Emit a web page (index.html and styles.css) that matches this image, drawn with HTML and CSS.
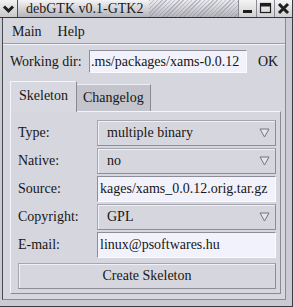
FILE: index.html
```html
<!DOCTYPE html>
<html>
<head>
<meta charset="utf-8">
<title>debGTK</title>
<link rel="stylesheet" href="styles.css">
</head>
<body>
<div class="window">
  <div class="titlebar">
    <div class="tb-icon">
      <svg width="17" height="17" viewBox="0 0 17 17"><path d="M4 6.5 L8.5 11 L13 6.5" fill="none" stroke="#1e1e1e" stroke-width="3"/></svg>
    </div>
    <div class="tb-title">debGTK v0.1-GTK2</div>
    <div class="tb-hatch"></div>
    <div class="tb-btn">
      <svg width="17" height="17" viewBox="0 0 17 17"><rect x="4" y="10" width="9" height="3" fill="#1e1e1e"/></svg>
    </div>
    <div class="tb-btn">
      <svg width="17" height="17" viewBox="0 0 17 17"><rect x="3.5" y="3.5" width="10" height="9" fill="none" stroke="#1e1e1e" stroke-width="1.2"/><rect x="3.5" y="3.5" width="10" height="3" fill="#1e1e1e"/></svg>
    </div>
    <div class="tb-btn">
      <svg width="17" height="17" viewBox="0 0 17 17"><path d="M4 4 L13 13 M13 4 L4 13" stroke="#1e1e1e" stroke-width="3"/></svg>
    </div>
  </div>
  <div class="frame">
    <div class="menubar">
      <span class="menu-item">Main</span>
      <span class="menu-item">Help</span>
    </div>
    <div class="workrow">
      <span class="work-label">Working dir:</span>
      <div class="entry work-entry"><span>.ms/packages/xams-0.0.12</span></div>
      <span class="ok">OK</span>
    </div>
    <div class="notebook">
      <div class="tabs">
        <div class="tab active">Skeleton</div>
        <div class="tab">Changelog</div>
      </div>
      <div class="panel">
        <div class="form">
          <span class="label">Type:</span>
          <div class="combo"><span>multiple binary</span><svg class="arrow" width="11" height="10" viewBox="0 0 11 10"><path d="M1 1 H10 L5.5 9 Z" fill="#e4e4ec" stroke="#74747c" stroke-width="1"/></svg></div>
          <span class="label">Native:</span>
          <div class="combo"><span>no</span><svg class="arrow" width="11" height="10" viewBox="0 0 11 10"><path d="M1 1 H10 L5.5 9 Z" fill="#e4e4ec" stroke="#74747c" stroke-width="1"/></svg></div>
          <span class="label">Source:</span>
          <div class="entry"><span>kages/xams_0.0.12.orig.tar.gz</span></div>
          <span class="label">Copyright:</span>
          <div class="combo"><span>GPL</span><svg class="arrow" width="11" height="10" viewBox="0 0 11 10"><path d="M1 1 H10 L5.5 9 Z" fill="#e4e4ec" stroke="#74747c" stroke-width="1"/></svg></div>
          <span class="label">E-mail:</span>
          <div class="entry"><span>linux@psoftwares.hu</span></div>
        </div>
        <div class="button">Create Skeleton</div>
      </div>
    </div>
  </div>
</div>
</body>
</html>
```
FILE: styles.css
```css
* { box-sizing: border-box; }
html, body { margin: 0; padding: 0; }
body {
  width: 293px;
  height: 307px;
  overflow: hidden;
  font-family: "Liberation Serif", "DejaVu Serif", serif;
  font-size: 14px;
  color: #161616;
  background: #c8c8d0;
}
.window {
  width: 293px;
  height: 307px;
  display: flex;
  flex-direction: column;
  background: #cacad2;
  border-right: 1px solid #3c3c44;
  border-bottom: 1px solid #3c3c44;
}
.titlebar {
  height: 18px;
  display: flex;
  border-bottom: 1px solid #34343c;
  background: linear-gradient(#f4f4f4, #b4b4bc);
}
.tb-icon {
  width: 18px;
  height: 17px;
  display: flex;
  align-items: center;
  justify-content: center;
  background: linear-gradient(#f2f2f2, #c8c8c8);
  border-right: 1px solid #505058;
}
.tb-title {
  padding-left: 8px;
  padding-right: 6px;
  font-size: 14px;
  line-height: 17px;
  color: #1a1a1a;
}
.tb-hatch {
  flex: 1;
  height: 17px;
  background:
    repeating-linear-gradient(135deg, rgba(150,150,160,0.55) 0 1px, rgba(0,0,0,0) 1px 3px),
    linear-gradient(#ececf0, #b4b4bc);
}
.tb-btn {
  width: 18px;
  height: 17px;
  display: flex;
  align-items: center;
  justify-content: center;
  background: linear-gradient(#f4f4f4, #d0d0d4);
  border-left: 1px solid #8a8a92;
}
.frame {
  flex: 1;
  margin: 0 6px 6px 2px;
  border-left: 1px solid #48484f;
  border-right: 1px solid #8a8a92;
  border-bottom: 1px solid #8a8a92;
  background: #d6d6de;
  display: flex;
  flex-direction: column;
}
.menubar {
  height: 26px;
  display: flex;
  align-items: center;
  gap: 16px;
  padding-left: 9px;
  padding-top: 3px;
  border-bottom: 1px solid #9c9ca4;
  box-shadow: 0 1px 0 #f4f4fc;
}
.workrow {
  margin-top: 6px;
  height: 23px;
  display: flex;
  align-items: center;
  padding-left: 7px;
}
.work-label { width: 79px; }
.entry {
  height: 100%;
  display: flex;
  align-items: center;
  overflow: hidden;
  white-space: nowrap;
  background: #f2f2fc;
  border-top: 1px solid #8e8e98;
  border-left: 1px solid #8e8e98;
  border-bottom: 1px solid #fafaff;
  border-right: 1px solid #fafaff;
  padding: 0 2px 0 2px;
}
.work-entry { width: 158px; padding-left: 1px; }
.ok { margin-left: 11px; }
.notebook {
  margin: 8px 4px 0 7px;
  display: flex;
  flex-direction: column;
}
.tabs {
  display: flex;
  align-items: flex-end;
  height: 31px;
  margin-bottom: -1px;
  position: relative;
  z-index: 1;
}
.tab {
  height: 27px;
  padding: 0 6px;
  display: flex;
  align-items: center;
  background: #c4c4cc;
  border-top: 1px solid #eeeef6;
  border-right: 1px solid #8a8a92;
  margin-bottom: 1px;
}
.tab.active {
  height: 31px;
  width: 67px;
  justify-content: center;
  background: #d8d8e0;
  border-left: 1px solid #f4f4fc;
  border-top: 1px solid #f4f4fc;
  border-right: 1px solid #8a8a92;
  margin-bottom: 0;
  padding-bottom: 2px;
}
.panel {
  border-top: 1px solid #f4f4fc;
  border-left: 1px solid #f4f4fc;
  border-right: 1px solid #8a8a92;
  border-bottom: 1px solid #8a8a92;
  padding: 8px 4px 4px 7px;
  display: flex;
  flex-direction: column;
}
.form {
  display: grid;
  grid-template-columns: 79px 179px;
  grid-auto-rows: 26px;
  row-gap: 2px;
}
.label {
  display: flex;
  align-items: center;
}
.combo {
  display: flex;
  align-items: center;
  justify-content: space-between;
  padding: 0 5px 0 9px;
  background: #d6d6de;
  border-top: 1px solid #a6a6ae;
  border-left: 1px solid #a6a6ae;
  border-right: 1px solid #8e8e96;
  border-bottom: 1px solid #8e8e96;
  box-shadow: inset 1px 1px 0 #f0f0f8;
}
.arrow { display: block; }
.button {
  margin-top: 5px;
  height: 26px;
  width: 258px;
  display: flex;
  align-items: center;
  justify-content: center;
  background: #d6d6de;
  border-top: 1px solid #a6a6ae;
  border-left: 1px solid #a6a6ae;
  border-right: 1px solid #8e8e96;
  border-bottom: 1px solid #8e8e96;
  box-shadow: inset 1px 1px 0 #f0f0f8;
}
```
